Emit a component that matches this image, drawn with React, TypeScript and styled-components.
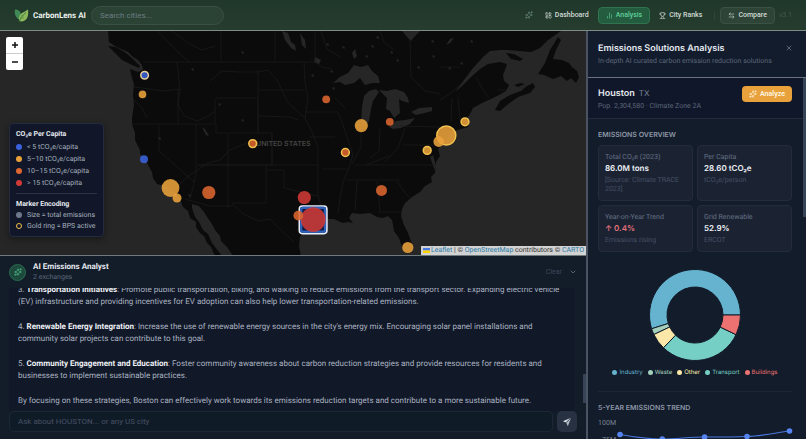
import React from 'react';
import styled, { createGlobalStyle } from 'styled-components';
import { LayoutDashboard, ChartNoAxesColumn, Trophy, ArrowLeftRight, X, ChevronDown, Sparkles } from 'lucide-react';

const Global = createGlobalStyle`
  *, *::before, *::after { box-sizing: border-box; }
  body { margin: 0; background: #131c2a; color: #e5e9f0; font-family: Roboto, Inter, sans-serif; text-rendering: geometricPrecision; }
  #root { height: 100vh; }
  h1, h2, h3, p, ul { margin: 0; padding: 0; }
  ul { list-style: none; }
  button, input { font: inherit; color: inherit; }
  button { border: 0; background: none; padding: 0; cursor: pointer; }
`;

const Page = styled.div`
  display: flex;
  flex-direction: column;
  height: 100vh;
  overflow: hidden;
`;

const TopBar = styled.header`
  display: flex;
  align-items: center;
  flex: none;
  height: 31px;
  padding: 0 14px;
  background: linear-gradient(#20382b, #253c2e);
  border-bottom: 1px solid #7d8d84;
`;

const Brand = styled.div`
  display: flex;
  align-items: center;
  gap: 4px;
  font-size: 8px;
  font-weight: 700;
  color: #eef2ef;
  svg { width: 15px; height: 15px; }
`;

const Search = styled.input`
  width: 133px;
  height: 19px;
  margin-left: 5px;
  padding: 0 8px;
  border: 1px solid #3a5042;
  border-radius: 10px;
  background: #2b4335;
  font-size: 8px;
  outline: none;
  &::placeholder { color: #6b7d84; opacity: 1; }
`;

const Nav = styled.nav`
  display: flex;
  align-items: center;
  gap: 1px;
  margin-left: auto;
`;

const SparkButton = styled.button`
  display: flex;
  margin-right: 3px;
  color: #6a8a80;
`;

const NavItem = styled.button<{ $tone?: 'active' | 'raised' }>`
  display: flex;
  align-items: center;
  gap: 3px;
  height: 17px;
  padding: 0 7px;
  border: 1px solid ${p => (p.$tone === 'active' ? '#2f7350' : p.$tone === 'raised' ? '#3c5145' : 'transparent')};
  border-radius: 4px;
  background: ${p => (p.$tone === 'active' ? '#245c40' : p.$tone === 'raised' ? '#2d4437' : 'transparent')};
  color: ${p => (p.$tone === 'active' ? '#5fcf98' : '#d3dbd6')};
  font-size: 7px;
  font-weight: 500;
`;

const NavRule = styled.span`
  width: 1px;
  height: 9px;
  margin: 0 4px 0 3px;
  background: #30463a;
`;

const Version = styled.span`
  margin-left: 3px;
  font-size: 7px;
  color: #435a4e;
`;

const Body = styled.main`
  display: flex;
  flex: 1;
  min-height: 0;
`;

const Left = styled.div`
  display: flex;
  flex-direction: column;
  flex: 1;
  min-width: 0;
`;

const MapArea = styled.section`
  position: relative;
  flex: 1;
  min-height: 0;
  background: #262626;
  overflow: hidden;
`;

const MapDrawing = styled.svg`
  display: block;
  width: 100%;
  height: 100%;
`;

const ZoomControl = styled.div`
  position: absolute;
  top: 6px;
  left: 6px;
  display: flex;
  flex-direction: column;
  width: 17px;
  border-radius: 2px;
  background: #fff;
  overflow: hidden;
`;

const ZoomButton = styled.button`
  display: grid;
  place-items: center;
  height: 16px;
  color: #111;
  & + & { height: 17px; border-top: 1px solid #ccc; }
  svg { width: 8px; height: 8px; }
`;

const Legend = styled.aside`
  position: absolute;
  left: 9px;
  bottom: 18px;
  width: 95px;
  padding: 6px 6px 5px;
  border: 1px solid #232c3e;
  border-radius: 4px;
  background: #111728;
  box-shadow: 0 2px 6px #0006;
`;

const LegendTitle = styled.h3`
  font-size: 7px;
  line-height: 9px;
  font-weight: 700;
  color: #e4e8ee;
  &:first-child { margin-bottom: 2px; }
`;

const LegendList = styled.ul<{ $row: number }>`
  li {
    display: flex;
    align-items: center;
    gap: 5px;
    height: ${p => p.$row}px;
    font-size: 7px;
    color: #a5afbf;
    white-space: nowrap;
  }
`;

const LegendRule = styled.hr`
  margin: 4px 0 6px;
  border: 0;
  border-top: 1px solid #2b3445;
`;

const Dot = styled.span<{ $color: string; $ring?: boolean }>`
  flex: none;
  width: 6px;
  height: 6px;
  border-radius: 50%;
  border: ${p => (p.$ring ? `1px solid ${p.$color}` : '0')};
  background: ${p => (p.$ring ? 'transparent' : p.$color)};
`;

const Attribution = styled.div`
  position: absolute;
  right: 0;
  bottom: 0;
  display: flex;
  align-items: center;
  height: 9px;
  padding: 0 2px;
  background: #d2d2d2;
  color: #333;
  font-size: 7px;
  line-height: 9px;
  white-space: pre;
  a { color: #2b7ba8; text-decoration: none; }
  svg { width: 7px; height: 5px; margin-right: 1px; }
`;

const Chat = styled.section`
  display: flex;
  flex-direction: column;
  flex: none;
  height: 184px;
  border-top: 1px solid #707b80;
  background: #131d2a;
`;

const ChatHeader = styled.div`
  display: flex;
  align-items: center;
  gap: 7px;
  flex: none;
  height: 32px;
  padding: 0 9px;
`;

const Avatar = styled.span`
  display: grid;
  place-items: center;
  width: 17px;
  height: 17px;
  border: 1px solid #2a6b4f;
  border-radius: 50%;
  background: #1d4a3c;
  color: #55c08c;
`;

const ChatTitle = styled.h2`
  font-size: 8px;
  line-height: 10px;
  font-weight: 700;
`;

const Muted = styled.p`
  font-size: 7px;
  line-height: 10px;
  color: #5b6678;
`;

const ChatActions = styled.div`
  display: flex;
  align-items: center;
  gap: 7px;
  margin-left: auto;
  font-size: 7px;
  color: #3c4758;
  svg { display: block; color: #7c8798; }
`;

const Scroller = styled.div`
  display: flex;
  flex: 1;
  min-height: 0;
  padding-left: 9px;
`;

const Messages = styled.div`
  display: flex;
  flex-direction: column;
  justify-content: flex-end;
  flex: 1;
  min-width: 0;
  overflow: hidden;
  padding: 0 8px 4px 9px;
  background: #111827;
`;

const Message = styled.p`
  flex: none;
  font-size: 8px;
  line-height: 12px;
  color: #aab3c2;
  & + & { margin-top: 13px; }
  b { color: #eef1f6; font-weight: 700; }
`;

const ChatTrack = styled.div`
  flex: none;
  display: flex;
  align-items: flex-end;
  justify-content: flex-end;
  width: 12px;
  padding-bottom: 8px;
`;

const Thumb = styled.div<{ $height: number }>`
  width: 3px;
  height: ${p => p.$height}px;
  background: #374357;
`;

const Composer = styled.form`
  display: flex;
  gap: 4px;
  flex: none;
  padding: 0 9px 7px;
`;

const Ask = styled.input`
  flex: 1;
  min-width: 0;
  height: 21px;
  padding: 0 8px;
  border: 1px solid #1b2937;
  border-radius: 5px;
  background: #101b28;
  font-size: 8px;
  outline: none;
  &::placeholder { color: #465163; opacity: 1; }
`;

const Send = styled.button`
  display: grid;
  place-items: center;
  width: 20px;
  height: 21px;
  border-radius: 5px;
  background: #273142;
  color: #dfe4ec;
`;

const Side = styled.aside`
  display: flex;
  flex-direction: column;
  flex: none;
  width: 220px;
  border-left: 2px solid #4a5361;
  background: #131c2a;
`;

const SideHeader = styled.header`
  display: flex;
  justify-content: space-between;
  align-items: flex-start;
  flex: none;
  height: 47px;
  padding: 11px 13px 0 10px;
  border-bottom: 1px solid #6a7280;
  background: #131c2d;
  svg { display: block; margin-top: 2px; color: #7a8494; }
`;

const SideTitle = styled.h2`
  font-family: Inter, sans-serif;
  font-size: 9px;
  line-height: 14px;
  font-weight: 600;
`;

const SideScroll = styled.div`
  display: flex;
  align-items: flex-start;
  flex: 1;
  min-height: 0;
  overflow: hidden;
`;

const SideContent = styled.div`
  flex: 1;
  min-width: 0;
`;

const CityRow = styled.section`
  display: flex;
  justify-content: space-between;
  align-items: flex-start;
  height: 41px;
  padding: 8px 11px 0 10px;
  border-bottom: 1px solid #212b3b;
  background: #11172a;
`;

const CityName = styled.h2`
  font-family: Inter, sans-serif;
  font-size: 9px;
  line-height: 14px;
  font-weight: 600;
  span { margin-left: 4px; font-size: 8px; font-weight: 400; color: #7b8698; }
`;

const Analyze = styled.button`
  display: flex;
  align-items: center;
  justify-content: center;
  gap: 3px;
  width: 50px;
  height: 16px;
  border-radius: 4px;
  background: #e9a23b;
  color: #fff3df;
  font-size: 7px;
  font-weight: 700;
`;

const Block = styled.section`
  margin: 0 11px 0 10px;
  padding-top: 11px;
  & + & { border-top: 1px solid #1c2635; }
`;

const BlockTitle = styled.h3`
  font-family: Inter, sans-serif;
  font-size: 7px;
  line-height: 9px;
  font-weight: 600;
  color: #8d97a8;
  text-transform: uppercase;
`;

const Cards = styled.div`
  display: grid;
  grid-template-columns: 1fr 1fr;
  gap: 4px;
  margin-top: 6px;
`;

const Card = styled.div`
  min-height: 46px;
  padding: 6px;
  border: 1px solid #222c3d;
  border-radius: 4px;
  background: #1b2333;
`;

const CardLabel = styled.p`
  font-size: 7px;
  line-height: 10px;
  color: #647084;
`;

const CardValue = styled.p<{ $alert?: boolean }>`
  margin-bottom: 1px;
  font-family: Inter, sans-serif;
  font-size: 8px;
  line-height: 13px;
  font-weight: 600;
  color: ${p => (p.$alert ? '#e17078' : '#eef1f6')};
`;

const CardNote = styled.p`
  font-size: 7px;
  line-height: 9px;
  color: #454f62;
`;

const Donut = styled.svg`
  display: block;
  width: 92px;
  height: 92px;
  margin: 17px auto 0;
`;

const Keys = styled.ul`
  display: flex;
  justify-content: center;
  gap: 5px;
  margin: 7px 0 14px;
`;

const Key = styled.li<{ $color: string }>`
  display: flex;
  align-items: center;
  gap: 2px;
  font-family: Inter, sans-serif;
  font-size: 6px;
  line-height: 9px;
  color: ${p => p.$color};
  &::before { content: ''; width: 5px; height: 5px; border-radius: 50%; background: ${p => p.$color}; }
`;

const Trend = styled.svg`
  display: block;
  width: 100%;
  height: 90px;
  margin-top: 3px;
  overflow: visible;
  text { font-size: 7px; fill: #7b8698; }
`;

const Leaf = () => (
  <svg viewBox="0 0 30 30" aria-hidden="true">
    <path d="M2 3c8 0 12 5 12 11-3 2-4 5-4 9C4 19 0 12 2 3Z" fill="#3f8a55" />
    <path d="M28 3c2 15-3 23-13 24-5 0-6-4-5-8C12 10 19 9 28 3Z" fill="#8cb95a" />
    <path d="M24 9C18 14 13 19 10 28" fill="none" stroke="#2f6b3f" strokeWidth="1.6" />
    <path d="M18 15v6M18 15h-4M14 20h5" stroke="#4d8a4a" strokeWidth="1" />
  </svg>
);

const amber = '#e9a23b';
const orange = '#dd652f';
const red = '#cf3a36';
const blue = '#3a62dc';
const gold = '#f2c14e';

type Pin = { city: string; x: number; y: number; r: number; color: string; ring?: string };
const pins: Pin[] = [
  { city: 'Seattle', x: 144.6, y: 75.2, r: 3.8, color: blue, ring: '#e8cf9a' },
  { city: 'Portland', x: 142.5, y: 94.4, r: 3.8, color: amber },
  { city: 'San Francisco', x: 144, y: 159.2, r: 4, color: blue },
  { city: 'Los Angeles', x: 170.5, y: 188, r: 8.9, color: amber },
  { city: 'San Diego', x: 177, y: 198, r: 4.5, color: amber },
  { city: 'Phoenix', x: 208.8, y: 192.5, r: 6.6, color: orange },
  { city: 'Denver', x: 252.7, y: 143.6, r: 3.9, color: orange, ring: gold },
  { city: 'Minneapolis', x: 326.2, y: 99.3, r: 3.9, color: orange },
  { city: 'Chicago', x: 361.3, y: 125.6, r: 6.6, color: amber },
  { city: 'St. Louis', x: 345.4, y: 152.5, r: 3.9, color: orange, ring: gold },
  { city: 'Detroit', x: 389.8, y: 121.8, r: 3.9, color: orange },
  { city: 'Boston', x: 465, y: 121.8, r: 3.9, color: amber, ring: gold },
  { city: 'New York', x: 446.3, y: 135.5, r: 9.5, color: amber, ring: gold },
  { city: 'Philadelphia', x: 438.8, y: 141.5, r: 5.4, color: amber },
  { city: 'Washington', x: 427.2, y: 150.4, r: 3.9, color: amber, ring: gold },
  { city: 'Atlanta', x: 381.5, y: 190.4, r: 5.5, color: orange },
  { city: 'Miami', x: 407.8, y: 247.5, r: 5.6, color: amber },
  { city: 'Dallas', x: 304.3, y: 197.5, r: 6.6, color: red },
  { city: 'Houston', x: 313.2, y: 219.6, r: 12.4, color: red },
  { city: 'Austin', x: 298.3, y: 215.6, r: 4.9, color: orange },
];

const land =
  'M108 31 109 42 115 46 121 49 128 52 133 57 138 60 142 65 143 70 138 72 130 69 132 78 134 84 133 95 134 105 132 118 132 124 135 133 135 140 140 150 140 154 146 160 148 165 152 172 153 178 157 184 165 186 171 190 178 196 180 199 183 207 188 211 190 218 196 222 196 227 200 233 204 236 207 243 211 247 215 256 222 256 215 247 212 243 208 234 203 230 199 222 195 217 192 208 192 204 199 206 204 212 207 217 212 224 215 230 220 236 221 241 227 247 233 256 301 256 299 246 300 237 304 231 312 227 320 221 327 219 334 219 338 221 343 223 348 222 353 223 349 218 352 213 360 214 370 213 377 217 383 218 388 216 392 220 393 225 394 231 399 238 402 247 406 252 411 251 412 244 408 233 404 225 401 216 402 209 405 203 412 197 420 192 425 186 432 182 431 177 435 173 436 162 440 156 438 149 444 143 451 132 458 130 468 127 469 124 466 119 470 114 473 108 482 103 493 98 499 95 506 91 509 85 504 81 503 75 505 70 507 64 500 62 488 64 480 69 471 77 462 86 455 92 464 80 473 68 484 56 490 51 500 50 508 50 519 51 531 52 540 48 548 40 561 31Z';

const islands = [
  'M108 46 116 47 126 53 134 60 140 66 139 68 132 65 122 60 115 53Z',
  'M495 110 500 101 510 95 521 91 527 86 533 83 535 87 530 93 518 97 507 105 500 111Z',
  'M538 74 545 63 550 50 558 37 561 40 556 50 553 59 562 60 569 63 572 67 577 71 579 77 576 83 571 78 567 81 561 76 553 79 544 75Z',
  'M506 53 514 54 523 59 520 61 511 59Z',
  'M514 85 520 83 525 84 518 87Z',
];

const lakes = [
  'M333 83 340 77 348 73 354 65 361 67 368 65 372 71 378 76 380 83 372 83 365 85 360 78 354 83 345 85 340 82Z',
  'M376 89 369 91 364 96 362 107 361 122 365 127 369 121 371 109 373 101 379 92Z',
  'M379 90 387 91 395 89 404 92 408 98 409 103 402 101 399 99 400 113 394 118 390 111 386 109 387 98 383 94Z',
  'M389 127 396 121 405 120 415 118 410 124 401 128 393 129Z',
  'M411 112 419 108 432 107 432 111 425 113 416 115Z',
  'M352 53 355 49 357 56 354 59Z',
  'M402 31 420 31 415 36 411 41 407 37Z',
  'M282 31 288 33 291 42 295 45 296 51 291 48 285 40Z',
  'M300 33 305 40 306 49 302 45Z',
  'M202 127 205 129 209 136 206 135Z',
  'M315 57 321 60 319 64 314 62Z',
  'M446 45 450 39 454 38 450 43Z',
  'M430 157 433 155 436 166 435 171Z',
];

const borders =
  'M143 62H315L322 67 332 69M134 87 150 89 164 91 180 89M177 62 178 71 180 90 178 105 184 116 197 121 209 116 215 111M178 90 178 124M132 124H215V98M159 124V151L194 182M196 124V174L193 187 190 199M216 98H258V133H216V124M258 70V133H272V165H198M258 90H305M258 116 290 117 298 120M304 62 305 82 308 99 305 118 312 132 318 148M228 133V208M272 133V165M266 165V203H232M198 165H318M266 170H284V188L300 192 318 196M318 148V195L322 210M305 112H338M310 137H335M322 169H347M338 112 343 125 348 140 353 155 349 168 343 182 340 198 338 213M361 127V147L352 164M380 128 379 151 370 158M355 165H435M347 180H400M357 181 355 210M377 181 380 212M397 181 406 194 411 199M378 212H401M400 126 439 127 447 138M405 128 398 148 385 162M403 145H436M185 199 210 206H232M232 204 245 215 259 221 270 219 282 231 294 242M134 100 142 108 147 118M221 31V62M275 31V62M315 31V62M158 31 169 43 183 57 190 62M172 31 190 44 202 50 215 46M410 40 411 77 425 91 440 94M440 100 452 92 463 82M452 98 451 122M458 97 460 120M476 77 483 90 489 98M175 188 190 175 208 163 220 160 230 150 247 143M210 81 222 71 240 72 258 72 268 70 277 80 288 103 305 118M335 98 345 108M366 165 389 156M440 67 460 67M321 31 327 49 340 57M380 31 384 42 394 50M497 90 506 90';

const specks = [[191, 69], [218, 104], [158, 138], [241, 120], [311, 75], [332, 88], [342, 47], [371, 46], [390, 52], [417, 67], [432, 56], [460, 63], [326, 44], [396, 60], [448, 68], [365, 56], [330, 71], [188, 195], [241, 52], [431, 41], [470, 41], [376, 37]];

const CityMap = () => (
  <MapDrawing viewBox="0 31 586 224" preserveAspectRatio="xMidYMid slice" role="img" aria-label="City emissions map">
    <path d={land} fill="#0b0b0b" />
    {islands.map(d => <path key={d} d={d} fill="#0b0b0b" />)}
    {lakes.map(d => <path key={d} d={d} fill="#262626" />)}
    <path d={borders} fill="none" stroke="#1a1a1a" strokeWidth="0.8" strokeLinejoin="round" />
    {specks.map(([x, y]) => <path key={`${x}-${y}`} d={`M${x} ${y}l2 -1 1 2 -1 1z`} fill="#252525" />)}
    <text x="256" y="146" fontFamily="Inter" fontSize="7" fontWeight="600" fill="#454545">UNITED STATES</text>
    <rect x="299.3" y="206" width="27.6" height="27.6" rx="3" fill="#0b1c45" stroke="#e8eefb" strokeWidth="1.6" />
    <rect x="301.2" y="207.9" width="23.8" height="23.8" rx="2" fill="none" stroke="#2e62bd" strokeWidth="2.2" />
    {pins.map(p => (
      <circle key={p.city} cx={p.x} cy={p.y} r={p.r} fill={p.color} fillOpacity="0.88" stroke={p.ring ?? 'none'} strokeWidth="1.5" />
    ))}
  </MapDrawing>
);

const slices = [
  { name: 'Industry', color: '#65b3cf', from: 162.4, to: 360 },
  { name: 'Waste', color: '#a3cfbb', from: 154.6, to: 162.4 },
  { name: 'Other', color: '#fbe7a8', from: 133.8, to: 154.6 },
  { name: 'Transport', color: '#75cfc4', from: 25.6, to: 133.8 },
  { name: 'Buildings', color: '#ec7272', from: 0, to: 25.6 },
];

const arc = (from: number, to: number) => {
  const at = (r: number, deg: number) => {
    const a = (deg * Math.PI) / 180;
    return `${(r * Math.cos(a)).toFixed(2)} ${(r * Math.sin(a)).toFixed(2)}`;
  };
  const big = to - from > 180 ? 1 : 0;
  return `M${at(45.5, from)}A45.5 45.5 0 ${big} 1 ${at(45.5, to)}L${at(28, to)}A28 28 0 ${big} 0 ${at(28, from)}Z`;
};

const trend: [number, number][] = [[22, 19.5], [64.3, 24], [106.6, 22], [149, 21.5], [191.5, 16]];

export default function App() {
  return (
    <>
      <Global />
      <Page>
        <TopBar>
          <Brand><Leaf />CarbonLens AI</Brand>
          <Search type="search" aria-label="Search cities" placeholder="Search cities..." />
          <Nav>
            <SparkButton aria-label="Assistant"><Sparkles size={8} /></SparkButton>
            <NavItem><LayoutDashboard size={7} />Dashboard</NavItem>
            <NavItem $tone="active"><ChartNoAxesColumn size={7} />Analysis</NavItem>
            <NavItem><Trophy size={7} />City Ranks</NavItem>
            <NavRule />
            <NavItem $tone="raised"><ArrowLeftRight size={7} />Compare</NavItem>
            <Version>v3.1</Version>
          </Nav>
        </TopBar>
        <Body>
          <Left>
            <MapArea>
              <CityMap />
              <ZoomControl>
                <ZoomButton aria-label="Zoom in"><svg viewBox="0 0 8 8"><path d="M4 1v6M1 4h6" stroke="currentColor" strokeWidth="1.5" /></svg></ZoomButton>
                <ZoomButton aria-label="Zoom out"><svg viewBox="0 0 8 8"><path d="M1 4h6" stroke="currentColor" strokeWidth="1.5" /></svg></ZoomButton>
              </ZoomControl>
              <Legend>
                <LegendTitle>CO₂e Per Capita</LegendTitle>
                <LegendList $row={12}>
                  <li><Dot $color={blue} />&lt; 5 tCO₂e/capita</li>
                  <li><Dot $color={amber} />5–10 tCO₂e/capita</li>
                  <li><Dot $color={orange} />10–15 tCO₂e/capita</li>
                  <li><Dot $color={red} />&gt; 15 tCO₂e/capita</li>
                </LegendList>
                <LegendRule />
                <LegendTitle>Marker Encoding</LegendTitle>
                <LegendList $row={11}>
                  <li><Dot $color="#6d788c" />Size = total emissions</li>
                  <li><Dot $color={gold} $ring />Gold ring = BPS active</li>
                </LegendList>
              </Legend>
              <Attribution>
                <svg viewBox="0 0 7 5" aria-hidden="true"><path d="M0 0h7v2.5H0z" fill="#4c7be1" /><path d="M0 2.5h7V5H0z" fill="#ffd500" /></svg>
                <a href="#leaflet">Leaflet</a> | © <a href="#osm">OpenStreetMap</a> contributors © <a href="#carto">CARTO</a>
              </Attribution>
            </MapArea>
            <Chat>
              <ChatHeader>
                <Avatar><Sparkles size={8} /></Avatar>
                <div>
                  <ChatTitle>AI Emissions Analyst</ChatTitle>
                  <Muted>2 exchanges</Muted>
                </div>
                <ChatActions>
                  <button>Clear</button>
                  <button aria-label="Collapse"><ChevronDown size={8} /></button>
                </ChatActions>
              </ChatHeader>
              <Scroller>
                <Messages>
                  <Message>3. <b>Transportation Initiatives</b>: Promote public transportation, biking, and walking to reduce emissions from the transport sector. Expanding electric vehicle (EV) infrastructure and providing incentives for EV adoption can also help lower transportation-related emissions.</Message>
                  <Message>4. <b>Renewable Energy Integration</b>: Increase the use of renewable energy sources in the city's energy mix. Encouraging solar panel installations and community solar projects can contribute to this goal.</Message>
                  <Message>5. <b>Community Engagement and Education</b>: Foster community awareness about carbon reduction strategies and provide resources for residents and businesses to implement sustainable practices.</Message>
                  <Message>By focusing on these strategies, Boston can effectively work towards its emissions reduction targets and contribute to a more sustainable future.</Message>
                </Messages>
                <ChatTrack><Thumb $height={29} /></ChatTrack>
              </Scroller>
              <Composer onSubmit={e => e.preventDefault()}>
                <Ask aria-label="Ask a question" placeholder="Ask about HOUSTON... or any US city" />
                <Send aria-label="Send">
                  <svg width="10" height="10" viewBox="0 0 24 24" aria-hidden="true"><path d="M22 2 2 10l8 3Z" fill="currentColor" /><path d="M22 2 14 22l-4-9Z" fill="currentColor" fillOpacity="0.75" /><path d="M22 2 10 13" stroke="#273142" strokeWidth="2" /></svg>
                </Send>
              </Composer>
            </Chat>
          </Left>
          <Side>
            <SideHeader>
              <div>
                <SideTitle>Emissions Solutions Analysis</SideTitle>
                <Muted>In-depth AI curated carbon emission reduction solutions</Muted>
              </div>
              <button aria-label="Close"><X size={8} /></button>
            </SideHeader>
            <SideScroll>
              <SideContent>
                <CityRow>
                  <div>
                    <CityName>Houston<span>TX</span></CityName>
                    <Muted>Pop. 2,304,580 · Climate Zone 2A</Muted>
                  </div>
                  <Analyze><Sparkles size={8} />Analyze</Analyze>
                </CityRow>
                <Block>
                  <BlockTitle>Emissions Overview</BlockTitle>
                  <Cards>
                    <Card><CardLabel>Total CO₂e (2023)</CardLabel><CardValue>86.0M tons</CardValue><CardNote>[Source: Climate TRACE 2023]</CardNote></Card>
                    <Card><CardLabel>Per Capita</CardLabel><CardValue>28.60 tCO₂e</CardValue><CardNote>tCO₂e/person</CardNote></Card>
                    <Card><CardLabel>Year-on-Year Trend</CardLabel><CardValue $alert>↑ 0.4%</CardValue><CardNote>Emissions rising</CardNote></Card>
                    <Card><CardLabel>Grid Renewable</CardLabel><CardValue>52.9%</CardValue><CardNote>ERCOT</CardNote></Card>
                  </Cards>
                  <Donut viewBox="-46 -46 92 92" role="img" aria-label="Emissions by sector">
                    {slices.map(s => <path key={s.name} d={arc(s.from, s.to)} fill={s.color} stroke="#131c2a" strokeWidth="1" />)}
                  </Donut>
                  <Keys>{slices.map(s => <Key key={s.name} $color={s.color}>{s.name}</Key>)}</Keys>
                </Block>
                <Block>
                  <BlockTitle>5-Year Emissions Trend</BlockTitle>
                  <Trend viewBox="0 0 194 90" preserveAspectRatio="xMinYMin meet" role="img" aria-label="Five year emissions trend">
                    <text x="18" y="10" textAnchor="end">100M</text>
                    <text x="18" y="27" textAnchor="end">75M</text>
                    <path d="M22 19.5C36 22 50 24 64.3 24S92 22 106.6 22 135 22 149 21.5 177 18 191.5 16" fill="none" stroke="#4a78e0" strokeWidth="1.2" />
                    {trend.map(([x, y]) => <circle key={x} cx={x} cy={y} r="2.8" fill="#5584f0" />)}
                  </Trend>
                </Block>
              </SideContent>
              <Thumb $height={139} />
            </SideScroll>
          </Side>
        </Body>
      </Page>
    </>
  );
}
